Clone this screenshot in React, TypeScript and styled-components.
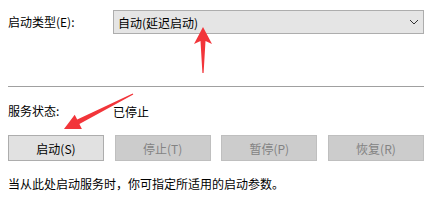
import React from "react";
import styled, { createGlobalStyle } from "styled-components";

const Global = createGlobalStyle`
  html, body {
    margin: 0;
    padding: 0;
    background: #ffffff;
  }
  body {
    font-family: "Noto Sans CJK SC", "Microsoft YaHei", sans-serif;
    font-size: 12px;
    color: #000;
  }
`;

const Page = styled.div`
  position: relative;
  width: 440px;
  height: 206px;
  box-sizing: border-box;
  padding: 9px 16px 0 8px;
  display: flex;
  flex-direction: column;
  overflow: hidden;
`;

const FieldRow = styled.div`
  display: flex;
  align-items: center;
  height: 26px;
`;

const Label = styled.div<{ $w?: number }>`
  width: ${(p) => p.$w ?? 105}px;
  flex: none;
  line-height: 16px;
  white-space: nowrap;
`;

const Select = styled.div`
  flex: 1;
  height: 24px;
  box-sizing: border-box;
  border: 1px solid #adadad;
  background: #e5e5e5;
  display: flex;
  align-items: center;
  justify-content: space-between;
  padding: 0 4px 0 4px;
`;

const Divider = styled.div`
  height: 1px;
  background: #a0a0a0;
  margin-top: 51px;
`;

const StatusRow = styled(FieldRow)`
  margin-top: 11px;
`;

const ButtonRow = styled.div`
  display: flex;
  justify-content: space-between;
  margin-top: 11px;
`;

const Button = styled.div<{ $disabled?: boolean }>`
  width: 96px;
  height: 26px;
  box-sizing: border-box;
  display: flex;
  align-items: center;
  justify-content: center;
  border: 1px solid ${(p) => (p.$disabled ? "#bfbfbf" : "#adadad")};
  background: ${(p) => (p.$disabled ? "#cccccc" : "#e1e1e1")};
  color: ${(p) => (p.$disabled ? "#838383" : "#000")};
`;

const Hint = styled.div`
  margin-top: 15px;
  line-height: 16px;
  white-space: nowrap;
`;

const Overlay = styled.svg`
  position: absolute;
  left: 0;
  top: 0;
  pointer-events: none;
`;

const Chevron = () => (
  <svg width="10" height="6" viewBox="0 0 10 6">
    <path d="M1 1 L5 5 L9 1" fill="none" stroke="#333" strokeWidth="1" />
  </svg>
);

export default function App() {
  return (
    <>
      <Global />
      <Page>
        <FieldRow>
          <Label>启动类型(E):</Label>
          <Select>
            <span>自动(延迟启动)</span>
            <Chevron />
          </Select>
        </FieldRow>
        <Divider />
        <StatusRow>
          <Label>服务状态:</Label>
          <span>已停止</span>
        </StatusRow>
        <ButtonRow>
          <Button>启动(S)</Button>
          <Button $disabled>停止(T)</Button>
          <Button $disabled>暂停(P)</Button>
          <Button $disabled>恢复(R)</Button>
        </ButtonRow>
        <Hint>当从此处启动服务时，你可指定所适用的启动参数。</Hint>
        <Overlay width="440" height="206" viewBox="0 0 440 206">
          <polygon
            points="203,27 212,44 205.5,41 203.6,73 202.4,73 200.5,41 194,44"
            fill="#f2353a"
          />
          <polygon
            points="64,129 81.9,128.9 79.4,124 133.3,94.6 132.7,93.4 77.2,119.6 74.7,114.7"
            fill="#f2353a"
          />
        </Overlay>
      </Page>
    </>
  );
}
